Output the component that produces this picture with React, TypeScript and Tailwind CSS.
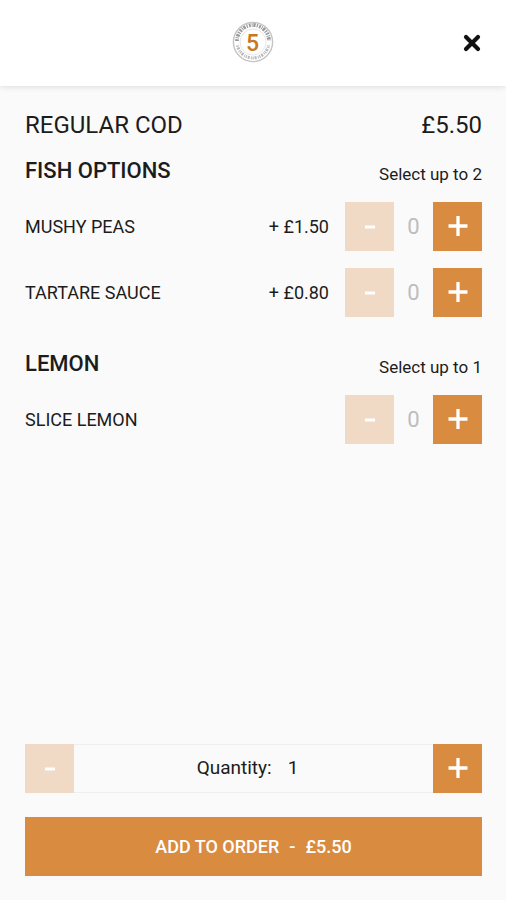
import { useState } from "react"

const groups = [
  {
    name: "FISH OPTIONS",
    max: 2,
    items: [
      { name: "MUSHY PEAS", price: 1.5 },
      { name: "TARTARE SAUCE", price: 0.8 },
    ],
  },
  {
    name: "LEMON",
    max: 1,
    items: [{ name: "SLICE LEMON", price: 0 }],
  },
]

const basePrice = 5.5

function Logo() {
  return (
    <svg viewBox="0 0 42 42" className="h-[42px] w-[42px]" role="img" aria-label="Restaurant logo">
      <circle cx="21" cy="21" r="19.6" fill="#fff" stroke="#c4c4c4" strokeWidth="1.4" />
      <circle cx="21" cy="21" r="13" fill="none" stroke="#e0e0e0" strokeWidth="0.8" />
      <path d="M5 20a16 16 0 0 1 32 0" fill="none" stroke="#9a9a9a" strokeWidth="3.8" strokeDasharray="1.8 1 0.9 0.8 2.4 1.1 1.2 1.2" />
      <path d="M5.4 24.5a16 16 0 0 0 31.2 0" fill="none" stroke="#b8b8b8" strokeWidth="3" strokeDasharray="1.2 0.9 2 1.2 0.9 0.8" />
      <text x="20.5" y="29.5" textAnchor="middle" fontFamily="Roboto, sans-serif" fontWeight="500" fontSize="23" fill="#c97625">5</text>
    </svg>
  )
}

function StepButton({ type, label, disabled, onClick }: { type: "plus" | "minus"; label: string; disabled?: boolean; onClick: () => void }) {
  return (
    <button
      type="button"
      aria-label={label}
      disabled={disabled}
      onClick={onClick}
      className="flex h-[49px] w-[49px] shrink-0 items-center justify-center bg-[#d98b40] text-white disabled:bg-[#f0d9c5]"
    >
      <svg viewBox="0 0 24 24" className="h-6 w-6" fill="none" stroke="currentColor" strokeWidth="3.3">
        {type === "plus" ? <path d="M2.5 11h19M12 1v20" /> : <path d="M7 12h10" strokeWidth="3" />}
      </svg>
    </button>
  )
}

function OptionRow({ name, price, count, full, onChange }: { name: string; price: number; count: number; full: boolean; onChange: (n: number) => void }) {
  return (
    <li className="flex items-center">
      <span className="flex-1 text-[18px] leading-6">{name}</span>
      {price > 0 && <span className="mr-4 text-[18px] leading-6">+ £{price.toFixed(2)}</span>}
      <StepButton type="minus" label={`Remove ${name}`} disabled={count === 0} onClick={() => onChange(count - 1)} />
      <span className="w-[39px] text-center text-[22px] leading-6 text-[#bdbdbd]">{count}</span>
      <StepButton type="plus" label={`Add ${name}`} disabled={full} onClick={() => onChange(count + 1)} />
    </li>
  )
}

function App() {
  const [counts, setCounts] = useState<Record<string, number>>({})
  const [quantity, setQuantity] = useState(1)

  let extras = 0
  groups.forEach((g) => g.items.forEach((i) => (extras += i.price * (counts[i.name] || 0))))
  const total = (basePrice + extras) * quantity

  return (
    <div className="flex min-h-screen w-full flex-col bg-[#fafafa] font-[Roboto,sans-serif] text-[#1c1c1c]">
      <header className="grid h-[86px] grid-cols-3 items-center bg-white px-6 shadow-[0_1px_6px_rgba(0,0,0,0.12)]">
        <div className="col-start-2 justify-self-center pb-0.5">
          <Logo />
        </div>
        <button type="button" aria-label="Close" className="justify-self-end">
          <svg viewBox="0 0 20 20" className="h-5 w-5" fill="none" stroke="#111" strokeWidth="4.2" strokeLinecap="round">
            <path d="M4 4l12 12M16 4L4 16" />
          </svg>
        </button>
      </header>

      <main className="flex flex-1 flex-col py-6 pr-6 pl-[25px]">
        <div className="flex items-center justify-between text-[24px] leading-[30px]">
          <h1>REGULAR COD</h1>
          <span>£{basePrice.toFixed(2)}</span>
        </div>

        <div className="mt-4 flex flex-col gap-8">
          {groups.map((g) => {
            const picked = g.items.reduce((n, i) => n + (counts[i.name] || 0), 0)
            return (
              <section key={g.name}>
                <div className="flex items-end justify-between">
                  <h2 className="text-[22px] leading-[30px] font-medium">{g.name}</h2>
                  <span className="text-[17px] leading-6">Select up to {g.max}</span>
                </div>
                <ul className="mt-4 flex flex-col gap-[17px]">
                  {g.items.map((i) => (
                    <OptionRow
                      key={i.name}
                      name={i.name}
                      price={i.price}
                      count={counts[i.name] || 0}
                      full={picked >= g.max}
                      onChange={(n) => setCounts({ ...counts, [i.name]: n })}
                    />
                  ))}
                </ul>
              </section>
            )
          })}
        </div>

        <div className="mt-auto flex items-center">
          <StepButton type="minus" label="Decrease quantity" disabled={quantity === 1} onClick={() => setQuantity(quantity - 1)} />
          <div className="flex h-[49px] flex-1 items-center justify-center gap-4 border-y border-[#efefef] pr-3 text-[19px]">
            <span>Quantity:</span>
            <span>{quantity}</span>
          </div>
          <StepButton type="plus" label="Increase quantity" onClick={() => setQuantity(quantity + 1)} />
        </div>

        <button type="button" className="mt-6 flex h-[59px] items-center justify-center gap-[10px] bg-[#d98b40] text-[18px] font-medium text-white">
          <span>ADD TO ORDER</span>
          <span>-</span>
          <span>£{total.toFixed(2)}</span>
        </button>
      </main>
    </div>
  )
}

export default App
